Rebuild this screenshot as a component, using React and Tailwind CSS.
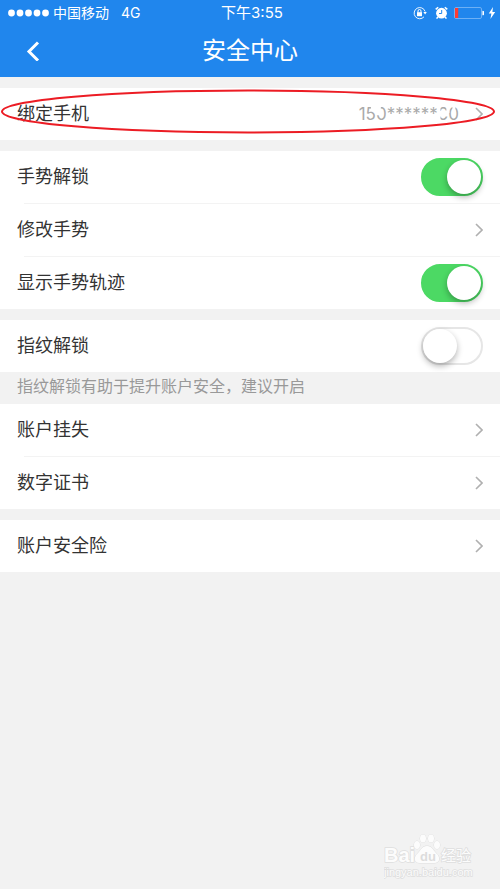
import React, { useState } from 'react'

const CHINESE = "font-['Inter','Noto_Sans_CJK_SC',sans-serif]"

const Chevron = () => (
    <svg width="8" height="14" viewBox="0 0 8 14" fill="none" stroke="#b0b0b0" strokeWidth="1.6" className="shrink-0">
        <path d="M1 1l6 6-6 6" />
    </svg>
)

const StatusBar = () => (
    <div className="grid grid-cols-3 items-center h-[25px] pl-2 pr-1 text-sm text-white">
        <div className="flex items-center">
            <svg width="41" height="8" viewBox="0 0 41 8" fill="#fff">
                {[3.5, 12, 20.5, 29, 37.5].map(x => <circle key={x} cx={x} cy="4" r="3.4" />)}
            </svg>
            <span className="ml-1 whitespace-nowrap">中国移动</span>
            <span className="ml-3">4G</span>
        </div>
        <div className="text-center text-[15px]">下午3:55</div>
        <div className="flex items-center justify-end">
            <svg width="14" height="14" viewBox="0 0 14 14" fill="none" stroke="#fff">
                <path d="M12.100 5.500A5.600 5.600 0 1 0 11 10.800" strokeWidth="0.9" />
                <path d="M10.400 6h3.400L12.100 8.400z" fill="#fff" stroke="none" />
                <rect x="4" y="6.2" width="5" height="4" fill="#fff" stroke="none" />
                <path d="M5 6.500V5a1.5 1.5 0 0 1 3 0v1.5" />
            </svg>
            <svg width="13" height="14" viewBox="0 0 13 14" className="ml-2">
                <circle cx="6.5" cy="7.2" r="5.4" fill="#fff" />
                <path d="M.7 3.4L3.2 1.2M12.3 3.4L9.8 1.2M2.8 11l-1.2 1.6M10.2 11l1.2 1.6" stroke="#fff" strokeWidth="1.5" />
                <path d="M6.7 4v3.500H4" fill="none" stroke="#2086ed" strokeWidth="1" />
            </svg>
            <svg width="30" height="14" viewBox="0 0 30 14" className="ml-1.5">
                <rect x="0.5" y="1.5" width="27" height="11" rx="1.5" fill="none" stroke="#6db0f5" />
                <rect x="1" y="2" width="3.2" height="10" fill="#fb3b34" />
                <path d="M28.4 4.800a2.200 2.200 0 0 1 0 4.400z" fill="#fff" />
            </svg>
            <svg width="8" height="12" viewBox="0 0 8 12" fill="#fff" className="ml-1">
                <path d="M5 0L.8 6.6h2.6L2.4 12l4.8-7H4.4z" />
            </svg>
        </div>
    </div>
)

const Header = () => (
    <header className="h-[77px] bg-[#2086ed] text-white">
        <StatusBar />
        <div className="grid grid-cols-3 items-center h-[51px] px-6">
            <button type="button" aria-label="返回" className="w-6 h-8 flex items-center">
                <svg width="16" height="20" viewBox="0 0 16 20" fill="none" stroke="#fff" strokeWidth="3">
                    <path d="M14 1.500L5 10.500l9 9" />
                </svg>
            </button>
            <h1 className="text-2xl text-center whitespace-nowrap">安全中心</h1>
        </div>
    </header>
)

const Group = ({ children }) => (
    <div className="bg-white [&>*+*]:before:absolute [&>*+*]:before:left-6 [&>*+*]:before:right-0 [&>*+*]:before:top-0 [&>*+*]:before:h-px [&>*+*]:before:bg-[#f3f3f3] [&>*+*]:h-[53px]">
        {children}
    </div>
)

const LinkRow = ({ label, children }) => (
    <button type="button" className="relative flex items-center w-full h-[52px] px-[17px] text-left">
        <span className="grow">{label}</span>
        {children}
        <Chevron />
    </button>
)

const SwitchRow = ({ label, initial }) => {
    const [on, setOn] = useState(initial)

    return (
        <label className="relative flex items-center justify-between h-[52px] px-[17px]">
            <span>{label}</span>
            <input
                type="checkbox"
                role="switch"
                checked={on}
                onChange={e => setOn(e.target.checked)}
                className="appearance-none flex items-center w-[62px] h-[38px] shrink-0 rounded-full border-2 border-[#e6e6e6] bg-white checked:border-[#4cd964] checked:bg-[#4cd964] checked:justify-end before:content-[''] before:size-[34px] before:rounded-full before:bg-white before:shadow-[0_3px_6px_rgba(0,0,0,0.3)]"
            />
        </label>
    )
}

// part of the digits is wiped out on purpose
const MaskedPhone = () => (
    <span className="relative mr-4 text-[17px] text-[#aaaaaa]">
        150******60
        <svg viewBox="0 0 101 24" className="absolute inset-0 size-full" fill="#fff" preserveAspectRatio="none">
            <path d="M12 3h5v6h-5zM17 3h5v10h-5zM79 3h3v16h-3zM82 9h8v5h-8zM88 3h3v8h-3zM94 3h3v7h-3z" />
        </svg>
    </span>
)

const Watermark = () => (
    <div className="mt-auto self-end mr-[26px] mb-2 font-['Liberation_Sans','Noto_Sans_CJK_SC',sans-serif]">
        <svg width="90" height="48" viewBox="0 0 90 48" fill="#fcfcfc" stroke="#dedede" strokeWidth="1" paintOrder="stroke" className="block">
            <text x="0" y="29" fontSize="20" fontWeight="bold" strokeWidth="1.5">Bai</text>
            <path d="M43 13c5 0 6 4 9 7 4 3 5 10-2 10H36c-7 0-6-7-2-10 3-3 4-7 9-7z" />
            <ellipse cx="33" cy="12" rx="3" ry="4" />
            <ellipse cx="39" cy="5.500" rx="3" ry="4" />
            <ellipse cx="47" cy="5.500" rx="3" ry="4" />
            <ellipse cx="53" cy="12" rx="3" ry="4" />
            <text x="36" y="28" fontSize="13" fontWeight="bold" fill="#dcdcdc" stroke="none">du</text>
            <text x="57" y="28" fontSize="15" strokeWidth="1.5">经验</text>
            <text x="0" y="43" fontSize="11" strokeWidth="1.5">jingyan.baidu.com</text>
        </svg>
    </div>
)

export default function App() {
    return (
        <div className={`flex flex-col min-h-screen bg-[#f2f2f2] text-lg text-[#333333] ${CHINESE}`}>
            <Header />
            <main className="flex flex-col gap-[11px] pt-[11px]">
                <div className="relative">
                    <Group>
                        <LinkRow label="绑定手机"><MaskedPhone /></LinkRow>
                    </Group>
                    {/* red marker ring round the whole row */}
                    <svg viewBox="0 0 500 52" preserveAspectRatio="none" className="absolute inset-0 size-full pointer-events-none">
                        <ellipse cx="248" cy="23.500" rx="246" ry="21" fill="none" stroke="#ec1c24" strokeWidth="2" />
                    </svg>
                </div>
                <Group>
                    <SwitchRow label="手势解锁" initial={true} />
                    <LinkRow label="修改手势" />
                    <SwitchRow label="显示手势轨迹" initial={true} />
                </Group>
                <div>
                    <Group>
                        <SwitchRow label="指纹解锁" initial={false} />
                    </Group>
                    <p className="h-8 px-[17px] text-base leading-7 text-[#999999]">指纹解锁有助于提升账户安全，建议开启</p>
                    <Group>
                        <LinkRow label="账户挂失" />
                        <LinkRow label="数字证书" />
                    </Group>
                </div>
                <Group>
                    <LinkRow label="账户安全险" />
                </Group>
            </main>
            <Watermark />
        </div>
    )
}
